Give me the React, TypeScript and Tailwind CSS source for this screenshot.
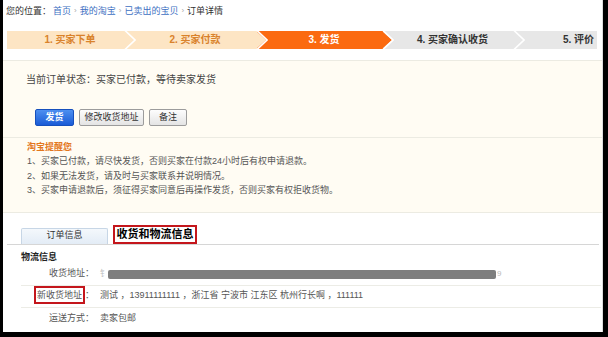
const font = "font-['Liberation_Sans','Noto_Sans_CJK_SC',sans-serif]";

const steps = [
  { label: '1. 买家下单', bg: '#fde5c4', text: 'text-[#d9822b]', w: 'w-[118px]', z: 'z-50', arrow: true },
  { label: '2. 买家付款', bg: '#fde5c4', text: 'text-[#d9822b]', w: 'w-[132px]', z: 'z-40', arrow: true },
  { label: '3. 发货', bg: '#fb6a10', text: 'text-white', w: 'w-[126px]', z: 'z-30', arrow: true },
  { label: '4. 买家确认收货', bg: '#e7e7e7', text: 'text-[#333]', w: 'w-[131px]', z: 'z-20', arrow: true },
  { label: '5. 评价', bg: '#e7e7e7', text: 'text-[#333]', w: 'flex-1', z: 'z-10', arrow: false },
];

function StepBar() {
  return (
    <div className="ml-[4px] mt-[9px] flex h-[18px] w-[590px] overflow-hidden">
      {steps.map((s, i) => (
        <div
          key={s.label}
          className={`relative flex h-full shrink-0 items-center ${s.w} ${s.z} ${i === 4 ? 'justify-end pr-[3px]' : 'justify-center pl-[8px]'}`}
          style={{ backgroundColor: s.bg }}
        >
          <span className={`text-[10px] font-bold leading-none ${s.text}`}>{s.label}</span>
          {s.arrow && (
            <svg className="absolute -right-[11px] top-0" width="12" height="18" viewBox="0 0 12 18">
              <polygon points="0,0 10,9 0,18" fill={s.bg} />
              <polyline points="0.5,-1 11,9 0.5,19" fill="none" stroke="#ffffff" strokeWidth="1.6" />
            </svg>
          )}
        </div>
      ))}
    </div>
  );
}

function Breadcrumb() {
  const links = ['首页', '我的淘宝', '已卖出的宝贝'];
  return (
    <div className="flex h-[22px] items-center pl-[3px] text-[9px] leading-none text-[#333]">
      <span>您的位置：</span>
      <span className="ml-[2px]" />
      {links.map((l) => (
        <span key={l} className="flex items-center">
          <span className="text-[#3d6fc2]">{l}</span>
          <span className="mx-[3px] text-[8px] text-[#aaa]">›</span>
        </span>
      ))}
      <span>订单详情</span>
    </div>
  );
}

function Panel() {
  return (
    <div className="mt-[11px] border-y border-[#ecebe2] bg-[#fffcf3]">
      <div className="border-b border-[#ecebe2] pb-[11px] pl-[23px] pt-[12px]">
        <div className="h-[14px] text-[10px] leading-[14px] text-[#444]">当前订单状态：买家已付款，等待卖家发货</div>
        <div className="ml-[9px] mt-[22px] flex gap-[5px]">
          <button className="flex h-[17px] w-[39px] items-center justify-center rounded-[2px] border border-[#1650bd] bg-gradient-to-b from-[#4d8ff0] to-[#1a5bd6] text-[9px] font-bold text-white">
            发货
          </button>
          <button className="flex h-[17px] w-[65px] items-center justify-center rounded-[2px] border border-[#9c9c9c] bg-gradient-to-b from-[#fdfdfd] to-[#e4e4e4] text-[9px] text-[#333]">
            修改收货地址
          </button>
          <button className="flex h-[17px] w-[38px] items-center justify-center rounded-[2px] border border-[#9c9c9c] bg-gradient-to-b from-[#fdfdfd] to-[#e4e4e4] text-[9px] text-[#333]">
            备注
          </button>
        </div>
      </div>
      <div className="pb-[14px] pl-[24px] pt-[2px] text-[9px] text-[#555]">
        <div className="h-[14px] font-bold leading-[14px] text-[#e3771d]">淘宝提醒您</div>
        <div className="leading-[14.5px]">1、买家已付款，请尽快发货，否则买家在付款24小时后有权申请退款。</div>
        <div className="leading-[14.5px]">2、如果无法发货，请及时与买家联系并说明情况。</div>
        <div className="leading-[14.5px]">3、买家申请退款后，须征得买家同意后再操作发货，否则买家有权拒收货物。</div>
      </div>
    </div>
  );
}

function Tabs() {
  return (
    <div className="ml-[4px] mt-[14px] flex h-[18px] w-[592px] items-end border-b border-[#d6d6d6] pl-[14px]">
      <div className="flex h-[16px] w-[87px] items-center justify-center rounded-t-[2px] border border-b-0 border-[#c7d6e6] bg-gradient-to-b from-[#f4f8fc] to-[#e3ecf6] text-[9px] text-[#333]">
        订单信息
      </div>
      <div className="ml-[5px] flex h-[19px] w-[84px] items-center justify-center border-2 border-[#c4161c] bg-white text-[11px] font-bold leading-none text-black">
        收货和物流信息
      </div>
    </div>
  );
}

function Row({ label, children, last }: { label: React.ReactNode; children: React.ReactNode; last?: boolean }) {
  return (
    <div className={`flex h-[22px] items-center ${last ? '' : 'border-b border-[#ecece6]'} ml-[14px] w-[580px]`}>
      <div className="w-[73px] text-right text-[9px] text-[#555]">{label}</div>
      <div className="ml-[6px] flex items-center text-[9px] text-[#555]">{children}</div>
    </div>
  );
}

function Logistics() {
  return (
    <div className="ml-[4px] w-[592px]">
      <div className="ml-[14px] mt-[5px] h-[14px] text-[9px] font-bold leading-[14px] text-[#222]">物流信息</div>
      <Row label="收货地址：">
        <span className="text-[8px] text-[#bbb]">钅</span>
        <span className="h-[9px] w-[388px] rounded-[2px] bg-[#7e7e7e]" />
        <span className="ml-[1px] text-[8px] text-[#bbb]">9</span>
      </Row>
      <Row
        label={
          <span>
            <span className="border-2 border-[#c4161c] px-[1px] py-[2px]">新收货地址</span>：
          </span>
        }
      >
        测试 ，13911111111 ，浙江省 宁波市 江东区 杭州行长啊 ，111111
      </Row>
      <Row label="运送方式：" last>
        卖家包邮
      </Row>
    </div>
  );
}

export default function App() {
  return (
    <div className={`flex h-[337px] w-[608px] bg-black ${font}`}>
      <div className="ml-[3px] h-[332px] w-[600px] overflow-hidden border-r border-[#ddd] bg-white">
        <Breadcrumb />
        <StepBar />
        <Panel />
        <Tabs />
        <Logistics />
      </div>
    </div>
  );
}
